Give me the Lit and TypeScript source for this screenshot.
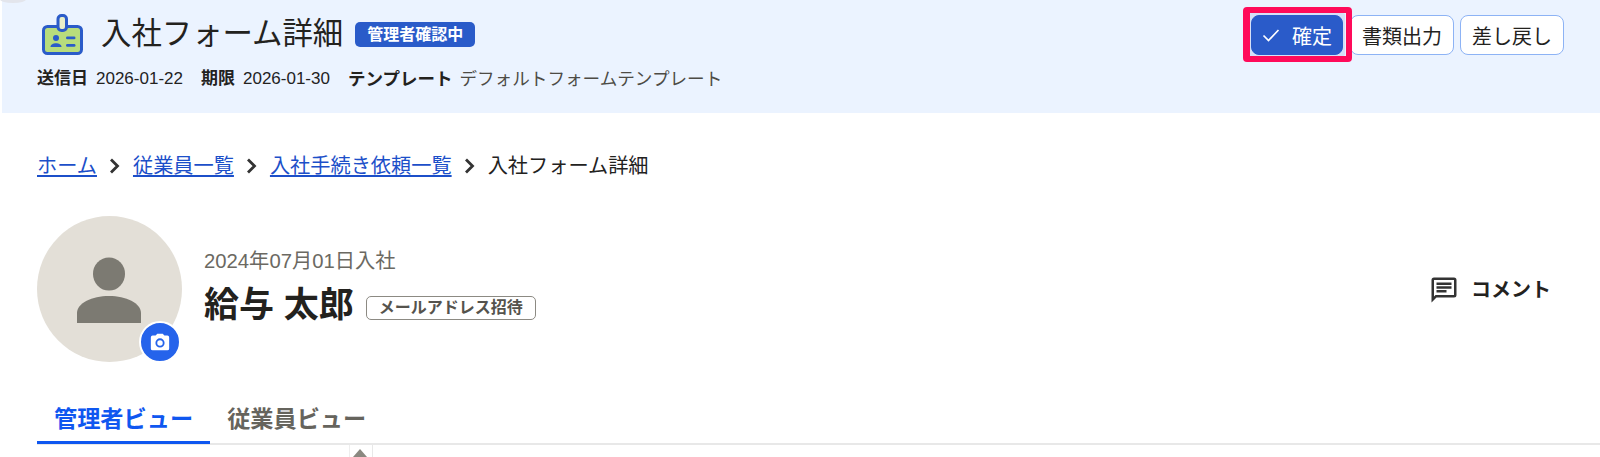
import { LitElement, html, css } from "lit";
import { customElement } from "lit/decorators.js";

@customElement("app-root")
export class AppRoot extends LitElement {
  static styles = css`
    :host {
      display: block;
      width: 1600px;
      height: 457px;
      overflow: hidden;
      position: relative;
      background: #fff;
      color: #23221e;
      font-family: "Liberation Sans", "Noto Sans CJK JP", sans-serif;
    }
    .blob { position: absolute; left: 0; top: -4px; width: 26px; height: 7px; border-radius: 50%; background: #e3e5ec; }
    .header {
      height: 113px;
      box-sizing: border-box;
      margin-left: 2px;
      background: #ebf3ff;
      padding: 14px 36px 0 35px;
      display: flex;
      justify-content: space-between;
    }
    .title-row { display: flex; align-items: center; height: 41px; margin-left: 5px; }
    .title-icon { width: 41px; height: 41px; margin-right: 18px; flex: none; }
    h1 { margin: 0 0 2px; font-size: 30.4px; font-weight: 400; line-height: 41px; }
    .status {
      margin-left: 12px;
      background: #2a5bc9;
      color: #fff;
      font-size: 16px;
      font-weight: 700;
      line-height: 25px;
      height: 25px;
      padding: 0 12px;
      border-radius: 5px;
    }
    .meta { display: flex; margin-top: 12px; font-size: 17px; line-height: 24px; }
    .meta b { font-weight: 700; margin-right: 8px; }
    .meta .v { margin-right: 18px; }
    .meta .tb { font-size: 17.5px; margin-right: 7px; }
    .meta .tv { color: #4d4b45; font-size: 17.6px; }
    .actions { display: flex; align-items: flex-start; padding-top: 1px; gap: 6px; position: relative; z-index: 0; }
    .btn {
      height: 40px;
      box-sizing: border-box;
      border-radius: 8px;
      border: 1px solid #8db3f5;
      background: #fff;
      font-size: 20px;
      font-family: inherit;
      color: #23221e;
      padding: 0 11px;
      display: flex;
      align-items: center;
    }
    .primary {
      background: #2a5bc9;
      border-color: #2a5bc9;
      color: #fff;
      gap: 12px;
      padding: 0 10px;
      margin-right: 1px;
      position: relative;
    }
    .primary::before {
      content: "";
      position: absolute;
      left: -3px; right: -3px; top: -3px; bottom: -2px;
      background: #d5e0f8;
      border-radius: 2px;
      z-index: -1;
    }
    .mark {
      position: absolute;
      left: -9px; right: -10px; top: -9px; bottom: -8px;
      border: 7px solid #ff0a5a;
      border-width: 6px 6px 6px 7px;
      border-radius: 4px;
      z-index: 2;
      pointer-events: none;
    }
    .crumbs { display: flex; align-items: center; padding: 39px 0 0 37px; font-size: 20.2px; line-height: 28px; height: 28px; }
    .crumbs a { color: #1c4fc9; text-decoration: underline; }
    .crumbs svg { width: 16px; height: 18px; margin: 0 10px; flex: none; }
    .profile { display: flex; padding: 36px 49px 0 37px; }
    .avatar { width: 145px; height: 146px; border-radius: 50%; background: #e3dfd7; position: relative; flex: none; }
    .avatar > svg { display: block; }
    .camera { position: absolute; left: 102px; top: 105px; width: 38px; height: 38px; border-radius: 50%; background: #2563eb; border: 2px solid #fff; display: flex; align-items: center; justify-content: center; }
    .info { margin-left: 22px; padding-top: 31px; }
    .joined { font-size: 20.3px; line-height: 28px; color: #6b6962; }
    .name-row { display: flex; align-items: center; margin-top: 6px; }
    .name { font-size: 35px; font-weight: 700; line-height: 48px; }
    .tag { margin-left: 12px; margin-top: 6px; border: 1px solid #8c8a83; border-radius: 5px; font-size: 16px; font-weight: 700; color: #55534d; line-height: 22px; padding: 0 12px; }
    .comment { margin: 59px 0 0 auto; display: flex; align-items: center; align-self: flex-start; gap: 12px; font-size: 20px; font-weight: 700; line-height: 30px; }
    .comment svg { display: block; }
    .tabs { display: flex; margin: 39px 0 0 37px; border-bottom: 2px solid #e8e8e8; width: 1563px; height: 42px; box-sizing: content-box; }
    .tab { padding: 0 17px; font-size: 23.2px; font-weight: 700; color: #66645d; line-height: 36px; height: 41px; box-sizing: border-box; }
    .tab.on { color: #0f57f0; border-bottom: 3px solid #0f57f0; height: 43px; }
    .split { position: absolute; left: 349px; top: 445px; width: 24px; height: 12px; border-left: 1px solid #eee; border-right: 1px solid #e8e8e8; box-sizing: border-box; background: #fff; }
    .tri { position: absolute; left: 353px; top: 449px; width: 0; height: 0; border-left: 7px solid transparent; border-right: 7px solid transparent; border-bottom: 8px solid #8a8880; }
  `;

  render() {
    const chev = html`<svg viewBox="0 0 16 18"><path d="M4 2.5l6.5 6.5L4 15.5" fill="none" stroke="#333" stroke-width="2.8"/></svg>`;
    return html`
      <div class="blob"></div>
      <div class="header">
        <div>
          <div class="title-row">
            <svg class="title-icon" viewBox="0 0 41 41">
              <rect x="1.5" y="12.5" width="38" height="27" rx="4" fill="#b8dc7c" stroke="#2a5bc9" stroke-width="3"/>
              <rect x="16" y="1.5" width="8.5" height="15" rx="3.5" fill="#e9efc9" stroke="#2a5bc9" stroke-width="3"/>
              <circle cx="14" cy="24" r="3" fill="#2a5bc9"/>
              <path d="M8.5 33c0-5 11-5 11 0z" fill="#2a5bc9"/>
              <rect x="24" y="22.5" width="9.5" height="2.8" rx="1.4" fill="#2a5bc9"/>
              <rect x="24" y="30" width="9.5" height="2.8" rx="1.4" fill="#2a5bc9"/>
            </svg>
            <h1>入社フォーム詳細</h1>
            <span class="status">管理者確認中</span>
          </div>
          <div class="meta">
            <b>送信日</b><span class="v">2026-01-22</span>
            <b>期限</b><span class="v">2026-01-30</span>
            <b class="tb">テンプレート</b><span class="tv">デフォルトフォームテンプレート</span>
          </div>
        </div>
        <div class="actions">
          <button class="btn primary">
            <svg width="18" height="18" viewBox="0 0 18 18"><path d="M1.5 9.5l5 5L16.5 4" fill="none" stroke="#fff" stroke-width="1.7"/></svg>
            確定
            <span class="mark"></span>
          </button>
          <button class="btn">書類出力</button>
          <button class="btn">差し戻し</button>
        </div>
      </div>
      <nav class="crumbs">
        <a>ホーム</a>${chev}
        <a>従業員一覧</a>${chev}
        <a>入社手続き依頼一覧</a>${chev}
        <span>入社フォーム詳細</span>
      </nav>
      <section class="profile">
        <div class="avatar">
          <svg width="145" height="146" viewBox="0 0 145 146">
            <ellipse cx="72" cy="58" rx="16" ry="16.5" fill="#7c7a72"/>
            <path d="M40 107V97c0-10 15-17 32-17s32 7 32 17v10z" fill="#7c7a72"/>
          </svg>
          <div class="camera">
            <svg width="22" height="22" viewBox="0 0 24 24">
              <path fill="#fff" fill-rule="evenodd" d="M9 3L7.2 5H4a2 2 0 0 0-2 2v12a2 2 0 0 0 2 2h16a2 2 0 0 0 2-2V7a2 2 0 0 0-2-2h-3.2L15 3zM12 8a5 5 0 1 1 0 10 5 5 0 0 1 0-10zm0 2a3 3 0 1 0 0 6 3 3 0 0 0 0-6z"/>
            </svg>
          </div>
        </div>
        <div class="info">
          <div class="joined">2024年07月01日入社</div>
          <div class="name-row">
            <span class="name">給与 太郎</span>
            <span class="tag">メールアドレス招待</span>
          </div>
        </div>
        <div class="comment">
          <svg width="30" height="30" viewBox="0 0 24 24"><path fill="#333" d="M20 2H4a2 2 0 0 0-2 2v18l4-4h14a2 2 0 0 0 2-2V4a2 2 0 0 0-2-2zm0 14H5.2L4 17.2V4h16zM6 12h8v2H6zm0-3h12v2H6zm0-3h12v2H6z"/></svg>
          コメント
        </div>
      </section>
      <div class="tabs">
        <div class="tab on">管理者ビュー</div>
        <div class="tab">従業員ビュー</div>
      </div>
      <div class="split"></div>
      <div class="tri"></div>
    `;
  }
}
